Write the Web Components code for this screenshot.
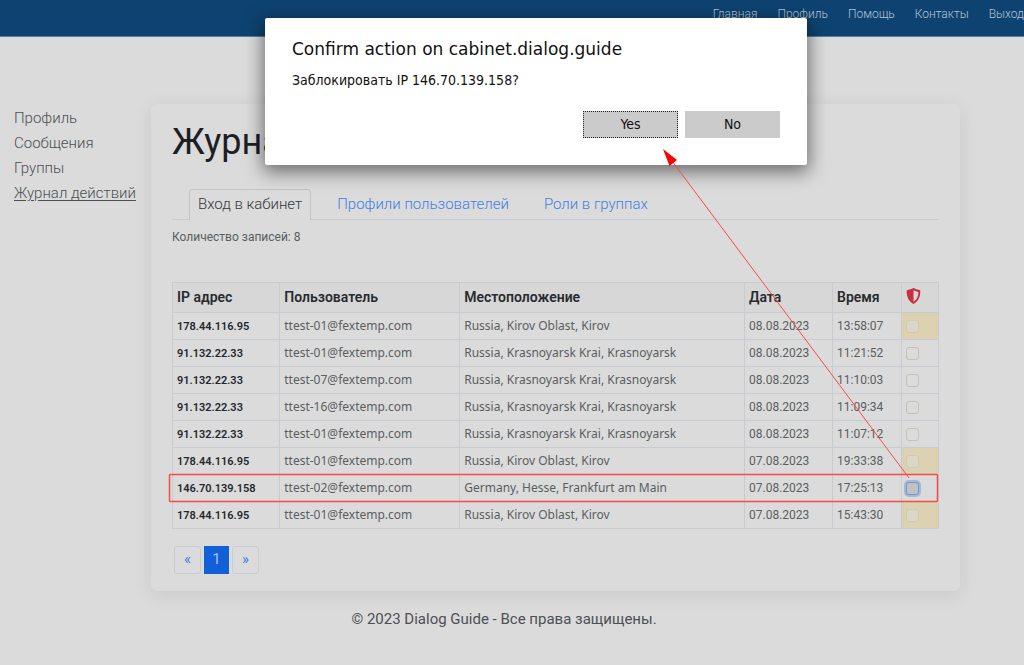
<!DOCTYPE html>
<html lang="ru">
<head>
<meta charset="utf-8">
<meta name="viewport" content="width=device-width, initial-scale=1">
<title>Журнал действий</title>
<style>
  html { min-height: 100%; background: #dbdbdb; }
  body {
    margin: 0;
    --ui: Roboto, "Noto Sans", sans-serif;
    --data: "Noto Sans", Roboto, sans-serif;
    --line: #c8cbd2;
    --link: #3f7fe0;
    --muted: #5a5e61;
    font-family: var(--ui);
    color: var(--muted);
  }
</style>
</head>
<body>
<cabinet-page></cabinet-page>
<script>
class Base extends HTMLElement {
  constructor() {
    super();
    this.attachShadow({ mode: 'open' }).innerHTML = '<style>*{box-sizing:border-box}</style>' + this.view();
  }
}

class TopNav extends Base {
  view() {
    return `<style>
      :host { display: block; background: #0e4371; border-bottom: 1px solid #5580a3; }
      nav { display: flex; justify-content: flex-end; gap: 20px; height: 36px; padding-top: 6px; }
      a { color: #b4c6d5; font-size: 12px; font-weight: 300; line-height: 16px; text-decoration: none; }
    </style>
    <nav><a href="#">Главная</a><a href="#">Профиль</a><a href="#">Помощь</a><a href="#">Контакты</a><a href="#">Выход</a></nav>`;
  }
}

class SideMenu extends Base {
  view() {
    return `<style>
      :host { display: block; }
      nav { display: flex; flex-direction: column; align-items: flex-start; }
      a { color: #4c5053; font-size: 15px; font-weight: 300; line-height: 25px; text-decoration: none; white-space: nowrap; }
      a[aria-current] { text-decoration: underline; text-underline-offset: 2px; }
    </style>
    <nav><a href="#">Профиль</a><a href="#">Сообщения</a><a href="#">Группы</a><a href="#" aria-current="page">Журнал действий</a></nav>`;
  }
}

class TabBar extends Base {
  view() {
    return `<style>
      :host { display: block; border-bottom: 1px solid var(--line); padding-left: 17px; }
      nav { display: flex; gap: 9px; margin-bottom: -1px; }
      a { padding: 0 8px 2px; border: 1px solid transparent; border-bottom: 0; color: var(--link); font-size: 15px; font-weight: 300; line-height: 28px; text-decoration: none; }
      a + a { padding-left: 16px; }
      a[aria-current] { background: #dbdbdb; border-color: #c0c5ca; border-radius: 4px 4px 0 0; color: #33383d; }
    </style>
    <nav><a href="#" aria-current="page">Вход в кабинет</a><a href="#">Профили пользователей</a><a href="#">Роли в группах</a></nav>`;
  }
}

class LogTable extends Base {
  view() {
    const k = 'Russia, Krasnoyarsk Krai, Krasnoyarsk', r = 'Russia, Kirov Oblast, Kirov';
    const rows = [
      ['178.44.116.95', '01', r, '08.08.2023', '13:58:07', 'own'],
      ['91.132.22.33', '01', k, '08.08.2023', '11:21:52', ''],
      ['91.132.22.33', '07', k, '08.08.2023', '11:10:03', ''],
      ['91.132.22.33', '16', k, '08.08.2023', '11:09:34', ''],
      ['91.132.22.33', '01', k, '08.08.2023', '11:07:12', ''],
      ['178.44.116.95', '01', r, '07.08.2023', '19:33:38', 'own'],
      ['146.70.139.158', '02', 'Germany, Hesse, Frankfurt am Main', '07.08.2023', '17:25:13', 'active'],
      ['178.44.116.95', '01', r, '07.08.2023', '15:43:30', 'own'],
    ];
    return `<style>
      :host { display: block; }
      table { width: 100%; border-collapse: collapse; table-layout: fixed; }
      th, td { border: 1px solid var(--line); padding: 0 4px; text-align: left; white-space: nowrap; }
      thead th { height: 30px; padding-bottom: 2px; background: #d7d7d7; color: #272b2f; font-size: 14px; font-weight: 600; }
      tbody th { color: #24282c; font-size: 11px; font-weight: 600; }
      td { height: 27px; font-size: 12px; }
      .text { font-family: var(--data); line-height: 16px; }
      .ip { width: 14%; } .user { width: 23.5%; } .date { width: 88px; } .time { width: 69px; } .block { width: 37px; }
      .own { background: #dcd2b2; }
      svg, input { display: block; }
      svg { width: 15px; height: 16px; margin-bottom: 2px; }
      input { appearance: none; width: 13px; height: 13px; margin: 0; border: 1px solid #c5c1b8; border-radius: 3px; }
      .own input { background: #dbd7c5; border-color: #d0cab4; }
      .active input { background: #c1c1c1; border-color: #6f96d4; box-shadow: 0 0 0 2px #a8b9d6; }
    </style>
    <table>
      <colgroup><col class="ip"><col class="user"><col><col class="date"><col class="time"><col class="block"></colgroup>
      <thead><tr><th>IP адрес</th><th>Пользователь</th><th>Местоположение</th><th>Дата</th><th>Время</th>
      <th aria-label="Блокировка"><svg viewBox="0 0 15 16"><path fill="#c92f40" fill-rule="evenodd" d="M7.500 0C5.500 1 3.500 1.700 1.500 2.100C1 2.200.700 2.600.700 3.100C.600 9.500 3 13.700 7.500 16C12 13.700 14.400 9.500 14.300 3.100C14.300 2.600 14 2.200 13.500 2.100C11.500 1.700 9.500 1 7.500 0ZM7.500 2.200C9 3 10.700 3.500 12.400 3.900C12.300 8.500 10.700 11.700 7.500 13.700Z"/></svg></th></tr></thead>
      <tbody>${rows.map(([ip, n, place, date, time, kind]) => `<tr><th scope="row">${ip}</th><td class="text">ttest-${n}@fextemp.com</td><td class="text">${place}</td><td>${date}</td><td>${time}</td><td class="${kind}"><input type="checkbox" aria-label="Заблокировать IP ${ip}"></td></tr>`).join('')}</tbody>
    </table>`;
  }
}

class PageList extends Base {
  view() {
    return `<style>
      :host { display: block; padding: 0 2px; }
      nav { display: flex; gap: 3px; }
      a { width: 27px; height: 28px; border: 1px solid var(--line); border-radius: 3px; color: var(--link); font-size: 15px; line-height: 25px; text-align: center; text-decoration: none; }
      a[aria-current] { width: 25px; background: #1260d8; border-color: #1260d8; border-radius: 0; color: #aac5ee; }
    </style>
    <nav aria-label="Страницы"><a href="#">«</a><a href="#" aria-current="page">1</a><a href="#">»</a></nav>`;
  }
}

class LogCard extends Base {
  view() {
    return `<style>
      :host { display: block; min-width: 0; padding: 16px 21px 17px; border-radius: 6px; background: #dbdbdb; box-shadow: 0 4px 18px 2px #00000012; }
      h1 { margin: 0 0 25px; color: #1c2024; font-size: 36px; font-weight: 400; line-height: 44px; }
      p { margin: 7px 0 35px; font-size: 12px; line-height: 20px; }
      page-list { margin-top: 17px; }
    </style>
    <h1>Журнал действий</h1>
    <tab-bar></tab-bar>
    <p>Количество записей: 8</p>
    <log-table></log-table>
    <page-list></page-list>`;
  }
}

class ConfirmDialog extends Base {
  view() {
    return `<style>
      :host { display: block; padding: 20px 27px 27px; background: #fff; border-radius: 2px; box-shadow: 0 5px 18px 2px #00000080; color: #111; font-family: "DejaVu Sans Condensed", "DejaVu Sans", sans-serif; }
      h2 { margin: 0 0 10px; font: 17px/22px "DejaVu Sans", sans-serif; }
      p { margin: 0 0 21px; font-size: 14px; line-height: 20px; }
      div { display: flex; justify-content: flex-end; gap: 7px; }
      button { width: 95px; height: 27px; padding: 0 0 2px; border: 0; background: #cbcbcb; color: #111; font: 14px/20px "DejaVu Sans Condensed", "DejaVu Sans", sans-serif; }
      .yes { border: 1px dotted #222; }
    </style>
    <h2>Confirm action on cabinet.dialog.guide</h2>
    <p>Заблокировать IP 146.70.139.158?</p>
    <div><button class="yes">Yes</button><button>No</button></div>`;
  }
}

class CalloutMarks extends Base {
  view() {
    return `<style>
      :host { display: block; pointer-events: none; }
      svg { display: block; }
    </style>
    <svg width="1024" height="665" viewBox="0 0 1024 665" fill="none" stroke="#fa4a4a" aria-hidden="true">
      <rect x="169.500" y="474.500" width="768" height="27" rx="1" stroke-width="1.500"/>
      <path d="M909 478L672 161"/>
      <path d="M663 149L677 160L669.500 166Z" fill="#f00" stroke="none"/>
    </svg>`;
  }
}

class CabinetPage extends Base {
  view() {
    return `<style>
      :host { display: block; position: relative; overflow: hidden; min-height: 100vh; }
      main { display: grid; grid-template-columns: 117px minmax(0, 1fr); gap: 20px; padding: 67px 64px 0 14px; }
      side-menu { padding-top: 2px; }
      footer { padding: 16px 16px 32px 0; color: #4c5054; font-size: 15px; font-weight: 400; line-height: 24px; text-align: center; }
      confirm-dialog { position: absolute; top: 18px; left: 265px; width: 542px; }
      callout-marks { position: absolute; top: 0; left: 0; }
    </style>
    <top-nav></top-nav>
    <main><side-menu></side-menu><log-card></log-card></main>
    <footer>© 2023 Dialog Guide - Все права защищены.</footer>
    <confirm-dialog role="dialog"></confirm-dialog>
    <callout-marks></callout-marks>`;
  }
}

customElements.define('top-nav', TopNav);
customElements.define('side-menu', SideMenu);
customElements.define('tab-bar', TabBar);
customElements.define('log-table', LogTable);
customElements.define('page-list', PageList);
customElements.define('log-card', LogCard);
customElements.define('confirm-dialog', ConfirmDialog);
customElements.define('callout-marks', CalloutMarks);
customElements.define('cabinet-page', CabinetPage);
</script>
</body>
</html>
